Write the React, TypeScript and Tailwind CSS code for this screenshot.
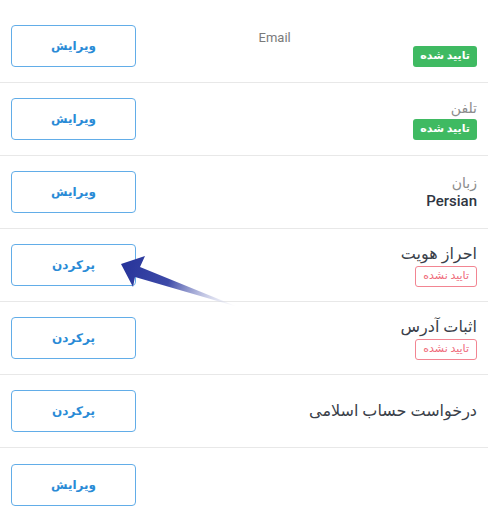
import React from 'react';

type Badge = 'ok' | 'no' | null;

interface RowProps {
  action: string;
  label?: string;
  labelKind?: 'muted' | 'title';
  value?: string;
  badge?: Badge;
  middle?: string;
}

const VerifyBadge: React.FC<{ kind: Badge }> = ({ kind }) => {
  if (kind === 'ok') {
    return (
      <span className="mt-[2px] inline-flex h-[21px] items-center rounded-[3px] bg-[#3fba62] px-[7px] text-[11px] font-bold text-white">
        تایید شده
      </span>
    );
  }
  return (
    <span className="mt-[2px] inline-flex h-[21px] items-center rounded-[3px] border border-[#f28592] bg-white px-[7px] text-[11px] text-[#ef6b7b]">
      تایید نشده
    </span>
  );
};

const Row: React.FC<RowProps> = ({ action, label, labelKind = 'muted', value, badge = null, middle }) => (
  <div className="flex h-[73px] items-center border-b-[1.5px] border-[#e8e8e8] pl-[11px] pr-[11px]">
    <button className="flex h-[42px] w-[125px] shrink-0 items-center justify-center rounded-[4px] border-[1.5px] border-[#62ade8] bg-white text-[12px] font-bold text-[#2a8bd6]">
      {action}
    </button>
    <div className="flex-1 self-start pt-[18px] text-center text-[13px] text-[#7a7a7a]">{middle}</div>
    <div className="flex flex-col items-end">
      {label !== undefined &&
        (labelKind === 'muted' ? (
          <span className="text-[14px] leading-[18px] text-[#8c8c8c]">{label}</span>
        ) : (
          <span className="text-[16px] leading-[20px] text-[#3a3f4a]">{label}</span>
        ))}
      {value && <span className="text-[15px] font-medium leading-[19px] text-[#2f3542]">{value}</span>}
      {badge && <VerifyBadge kind={badge} />}
    </div>
  </div>
);

export default function App() {
  return (
    <div
      className="relative h-[520px] w-[500px] bg-white pt-[10px]"
      style={{ fontFamily: 'Roboto, "DejaVu Sans", sans-serif' }}
    >
      <div className="w-[488px]">
        <Row action="ویرایش" label={'\u00a0'} badge="ok" middle="Email" />
        <Row action="ویرایش" label="تلفن" badge="ok" />
        <Row action="ویرایش" label="زبان" value="Persian" />
        <Row action="پرکردن" label="احراز هویت" labelKind="title" badge="no" />
        <Row action="پرکردن" label="اثبات آدرس" labelKind="title" badge="no" />
        <Row action="پرکردن" label="درخواست حساب اسلامی" labelKind="title" />
        <div className="flex h-[73px] items-center pl-[11px]">
          <button className="flex h-[42px] w-[125px] items-center justify-center rounded-[4px] border-[1.5px] border-[#62ade8] bg-white text-[12px] font-bold text-[#2a8bd6]">
            ویرایش
          </button>
        </div>
      </div>

      {/* pointer arrow */}
      <svg className="pointer-events-none absolute left-0 top-0" width="500" height="520" viewBox="0 0 500 520">
        <defs>
          <linearGradient id="arrowGrad" x1="122" y1="265" x2="238" y2="307" gradientUnits="userSpaceOnUse">
            <stop offset="0" stopColor="#27349a" />
            <stop offset="0.4" stopColor="#3d4aa8" />
            <stop offset="1" stopColor="#ffffff" stopOpacity="0.3" />
          </linearGradient>
        </defs>
        <polygon points="121,264 145,256 140,267 238,307 135,277 133,287" fill="url(#arrowGrad)" />
      </svg>
    </div>
  );
}
